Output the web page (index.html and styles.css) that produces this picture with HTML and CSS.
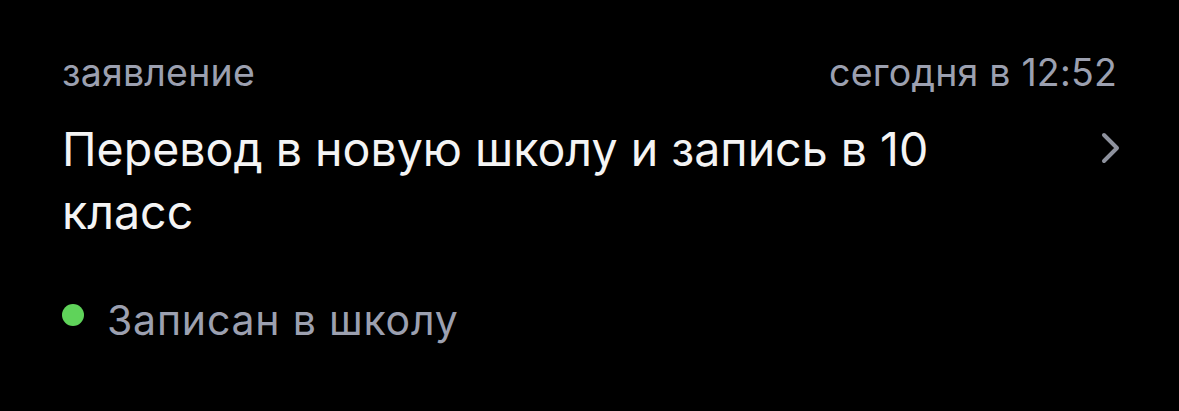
FILE: index.html
```html
<!DOCTYPE html>
<html lang="ru">
<head>
<meta charset="utf-8">
<link rel="stylesheet" href="styles.css">
</head>
<body>
<div class="card">
  <div class="meta">
    <span class="kind">заявление</span>
    <span class="date">сегодня в 12:52</span>
  </div>
  <div class="main">
    <div class="title">Перевод в новую школу и запись в 10 класс</div>
    <svg class="chevron" width="20" height="32" viewBox="0 0 20 32">
      <path d="M3 3 L16 16 L3 29" fill="none" stroke="#8e929e" stroke-width="4" stroke-linecap="round" stroke-linejoin="round"/>
    </svg>
  </div>
  <div class="status">
    <span class="dot"></span>
    <span class="status-text">Записан в школу</span>
  </div>
</div>
</body>
</html>
```

FILE: styles.css
```css
html, body {
  margin: 0;
  padding: 0;
  background: #000;
}
body {
  width: 1179px;
  height: 411px;
  overflow: hidden;
  font-family: Inter, "Liberation Sans", Arial, sans-serif;
}
.card {
  padding: 52px 62px 0 62px;
  display: flex;
  flex-direction: column;
}
.meta {
  display: flex;
  justify-content: space-between;
  align-items: baseline;
  color: #9ca0b0;
  font-size: 37.5px;
  line-height: 42px;
  letter-spacing: 0.2px;
}
.main {
  display: flex;
  justify-content: space-between;
  align-items: flex-start;
  margin-top: 24px;
}
.title {
  color: #f4f4f4;
  font-size: 46.5px;
  line-height: 63px;
  width: 960px;
}
.chevron {
  margin-top: 14px;
  margin-right: -4px;
}
.status {
  display: flex;
  align-items: center;
  gap: 23px;
  margin-top: 52px;
}
.dot {
  width: 22px;
  height: 22px;
  border-radius: 50%;
  background: #5fd35a;
  margin-top: -10px;
}
.status-text {
  color: #9ca0b0;
  font-size: 41px;
  line-height: 48px;
  letter-spacing: 0.8px;
}
```
